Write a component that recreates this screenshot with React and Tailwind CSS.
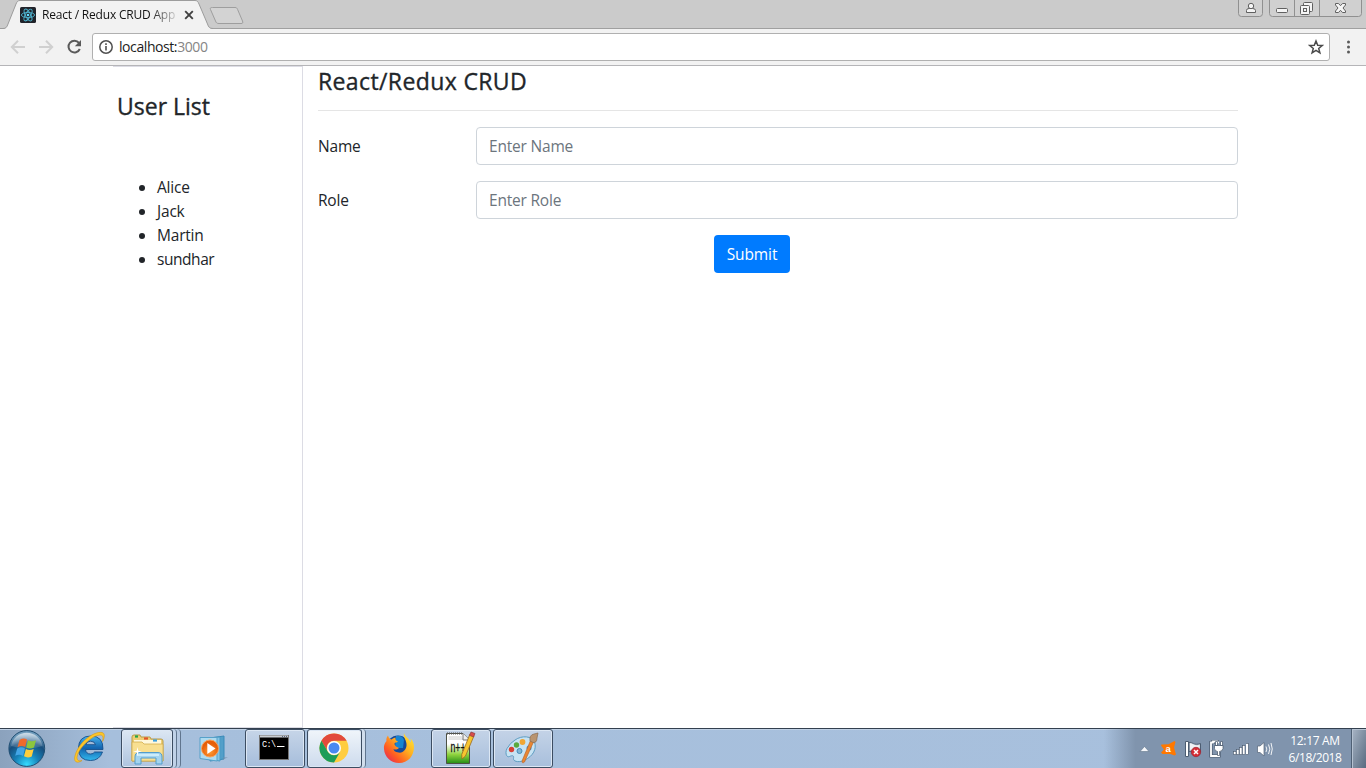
import React from "react";

function ReactFavicon() {
  return (
    <svg width="16" height="16" viewBox="0 0 16 16">
      <rect width="16" height="16" rx="1.5" fill="#20232a" />
      <g fill="none" stroke="#4fb4cf" strokeWidth="0.9">
        <ellipse cx="8" cy="8" rx="6.6" ry="2.6" />
        <ellipse cx="8" cy="8" rx="6.6" ry="2.6" transform="rotate(60 8 8)" />
        <ellipse cx="8" cy="8" rx="6.6" ry="2.6" transform="rotate(120 8 8)" />
      </g>
      <circle cx="8" cy="8" r="1.3" fill="#61dafb" />
    </svg>
  );
}

function TabStrip() {
  return (
    <div className="relative flex h-[29px] bg-[#cbcbcb]">
      <svg className="absolute inset-0" width="1366" height="29" viewBox="0 0 1366 29">
        <path d="M0 28.5H1366" stroke="#a0a0a0" />
        <path d="M3 29C6 28.5 7 27 8 24L16 4C17 1.5 18 .5 20 .5H195C197 .5 198 1.5 199 4L207.500 24C208.500 27 209.500 28.500 213 29Z" fill="#f2f2f2" />
        <path d="M0 28.5H3C6 28.500 7 27 8 24L16 4C17 1.500 18 .500 20 .500H195C197 .500 198 1.500 199 4L207.500 24C208.500 27 209.500 28.500 213 28.500" fill="none" stroke="#9c9c9c" />
        <path d="M212.500 7.500H235C236.500 7.500 237 8 237.600 9.500L242.500 21C243.200 23 242.700 23.500 241 23.500H219C217 23.500 216.300 23 215.500 21L210.500 9.500C209.900 8 210.500 7.500 212.500 7.500Z" fill="#d3d3d3" stroke="#9e9e9e" />
      </svg>
      <div className="relative ml-5 mt-[7px] h-4 w-4"><ReactFavicon /></div>
      <div className="relative ml-1.5 mt-[7px] h-4 w-[135px] overflow-hidden whitespace-nowrap bg-linear-to-r from-[#111] from-80% to-[#11111120] bg-clip-text text-[12px] leading-4 tracking-[-0.2px] text-transparent">
        React / Redux CRUD App
      </div>
      <svg className="relative ml-[7px] mt-[10px]" width="10" height="10" viewBox="0 0 10 10">
        <path d="M1.200 1.200L8.800 8.800M8.800 1.200L1.200 8.800" stroke="#404040" strokeWidth="1.900" />
      </svg>
      <WindowButtons />
    </div>
  );
}

function WindowButtons() {
  return (
    <svg className="relative ml-auto mr-1" width="126" height="19" viewBox="1236 0 126 19">
      <g fill="#d0d0d0" stroke="#909090">
        <path d="M1238.500 -1V13.500Q1238.500 16.500 1241.500 16.500H1259.500Q1262.500 16.500 1262.500 13.500V-1" />
        <path d="M1269.500 -1V13.500Q1269.500 16.500 1272.500 16.500H1358.500Q1361.500 16.500 1361.500 13.500V-1" />
        <path d="M1294.500 0V16M1319.500 0V16" />
      </g>
      <g fill="#f5f5f5" stroke="#606060">
        <path d="M1246.500 12.500V10.500Q1246.500 8.500 1249 8.500H1252.500Q1255.500 8.500 1255.500 10.500V12.500Z" />
        <circle cx="1251" cy="6" r="2.700" />
        <rect x="1276.500" y="8.500" width="11" height="4" rx="1" />
        <rect x="1303.500" y="2.500" width="9" height="9" rx="1" />
        <rect x="1300.500" y="5.500" width="9" height="9" rx="1" />
        <rect x="1303.500" y="8.500" width="3" height="3" />
        <path d="M1335.500 3.500H1338.500L1340.500 5.700L1342.500 3.500H1345.500V5L1343 8L1345.500 11V12.500H1342.500L1340.500 10.300L1338.500 12.500H1335.500V11L1338 8L1335.500 5Z" />
      </g>
    </svg>
  );
}

function Toolbar() {
  return (
    <div className="flex h-[37px] items-center border-b border-[#b5b5b8] bg-[#f2f2f2]">
      <svg className="ml-[10px]" width="74" height="16" viewBox="10 39 74 16" fill="none">
        <g stroke="#d0d0d0" strokeWidth="2">
          <path d="M25 47H12M18 40.700L11.800 47L18 53.300" />
          <path d="M39 47H52M46 40.700L52.200 47L46 53.300" />
        </g>
        <path d="M79 42.800A5.900 5.900 0 1 0 79.800 49" stroke="#5a5a5a" strokeWidth="2" />
        <path d="M81 40V46.200H74.800Z" fill="#5a5a5a" />
      </svg>
      <div className="ml-2 flex h-7 w-[1238px] items-center rounded-[3px] border border-[#b0b0b0] bg-white">
        <svg className="ml-[5px]" width="16" height="16" viewBox="0 0 16 16">
          <circle cx="8" cy="8" r="6.200" fill="none" stroke="#505050" strokeWidth="1.500" />
          <path d="M8 7V11.500M8 4.300V5.900" stroke="#505050" strokeWidth="1.600" />
        </svg>
        <div className="ml-[5px] text-[14px] leading-5 tracking-[-0.42px] text-[#1c1c1c]">localhost:<span className="text-[#858585]">3000</span></div>
        <svg className="ml-auto mr-[5px]" width="16" height="16" viewBox="0 0 16 16">
          <path d="M8 2L9.700 6.300L14.200 6.500L10.700 9.400L11.900 13.900L8 11.400L4.100 13.900L5.300 9.400L1.800 6.500L6.300 6.300Z" fill="none" stroke="#4a4a4a" strokeWidth="1.500" />
        </svg>
      </div>
      <svg className="ml-4" width="5" height="14" viewBox="0 0 5 14" fill="#5a5a5a">
        <circle cx="2.500" cy="2" r="1.500" /><circle cx="2.500" cy="7" r="1.500" /><circle cx="2.500" cy="12" r="1.500" />
      </svg>
    </div>
  );
}

function Field({ label, placeholder }) {
  return (
    <div className="mb-4 flex h-[38px] items-center">
      <label className="w-[158px] text-[15.5px] leading-6 tracking-[-0.2px]">{label}</label>
      <input
        className="h-[38px] flex-1 rounded-[4px] border border-[#ced4da] px-3 text-[15.5px] tracking-[-0.2px] placeholder:text-[#6c757d]"
        placeholder={placeholder}
      />
    </div>
  );
}

function Page() {
  return (
    <main className="flex h-[662px] bg-white pl-[113px] text-[#212529]">
      <aside className="w-[190px] border-y border-r border-[#dcdce4] pl-1 pt-[23px]">
        <h2 className="text-[23px] font-medium leading-[32px] [-webkit-text-stroke:0.35px_#212529]">User List</h2>
        <ul className="mt-[53px] list-disc pl-10 text-[15.5px] leading-6 tracking-[-0.2px]">
          <li>Alice</li>
          <li>Jack</li>
          <li>Martin</li>
          <li className="tracking-[-0.45px]">sundhar</li>
        </ul>
      </aside>
      <section className="ml-[15px] w-[920px]">
        <h2 className="-mt-px text-[23px] font-medium leading-[32px] tracking-[0.38px] [-webkit-text-stroke:0.35px_#212529]">React/Redux CRUD</h2>
        <hr className="mb-4 mt-[13px] border-[#e5e5e5]" />
        <Field label="Name" placeholder="Enter Name" />
        <Field label="Role" placeholder="Enter Role" />
        <button className="ml-[396px] block h-[38px] w-[76px] rounded-[4px] bg-[#007bff] pt-px text-[15.5px] tracking-[-0.1px] text-white">Submit</button>
      </section>
    </main>
  );
}

function StartOrb() {
  return (
    <svg width="40" height="39" viewBox="7 729 40 39">
      <defs>
        <radialGradient id="orb" cx=".5" cy=".95" r=".85">
          <stop offset="0" stopColor="#35dcff" /><stop offset=".4" stopColor="#1681b8" /><stop offset=".75" stopColor="#174d7c" /><stop offset="1" stopColor="#6d9abb" />
        </radialGradient>
        <linearGradient id="orbGloss" x1="0" y1="0" x2="0" y2="1"><stop offset="0" stopColor="#fff" stopOpacity=".65" /><stop offset="1" stopColor="#fff" stopOpacity=".08" /></linearGradient>
      </defs>
      <circle cx="26.800" cy="748.500" r="17.900" fill="url(#orb)" stroke="#204e72" />
      <path d="M11 746A16 16 0 0 1 42.500 746Q27 751 11 746Z" fill="url(#orbGloss)" />
      <path d="M19.500 740Q23.500 737.300 27 739.500L25.200 747Q21.500 745 17.500 747.200Z" fill="#ef6a2c" />
      <path d="M28 740.200Q31.500 742.200 36 740.200L34 747.600Q30 749.500 26.200 747.500Z" fill="#8cc63e" />
      <path d="M17.200 748.400Q21.300 746.300 25 748.500L23 756Q19.500 753.700 15.200 755.700Z" fill="#43a5e6" />
      <path d="M25.900 749Q29.500 751.100 33.700 749L31.700 756.500Q27.700 758.500 24 756.300Z" fill="#ffce3d" />
    </svg>
  );
}

function InternetExplorer() {
  return (
    <svg width="34" height="34" viewBox="0 0 34 34">
      <defs><linearGradient id="ie" x1="0" y1="0" x2="0" y2="1"><stop offset="0" stopColor="#46b5ef" /><stop offset=".5" stopColor="#1263ae" /><stop offset="1" stopColor="#32b9ee" /></linearGradient></defs>
      <path d="M31 19.500H13.500Q14 24 18.500 24Q21.500 24 22.600 22H30.500Q27.500 30.500 18.500 30.500Q6.500 30.500 6.500 18.500Q6.500 6 18.700 6Q31.500 6 31 19.500ZM13.700 14.700H23.500Q22.700 11.200 18.600 11.200Q14.700 11.200 13.700 14.700Z" fill="url(#ie)" stroke="#164f8b" strokeWidth=".9" />
      <path d="M10 30.500C5 34 1 32 3.200 25C7 12 22 1 30 2.500C33.500 3.300 32.500 8 30.500 11.500C31.500 7 31 5 28 5C20 5 5.500 19 5 27.500C5 31 7.500 31.200 10 30.500Z" fill="#fcc62a" stroke="#d79917" strokeWidth=".6" />
    </svg>
  );
}

function Explorer() {
  return (
    <svg width="34" height="34" viewBox="0 0 34 34">
      <path d="M2 29V5Q2 3 4 3H10L11 5H20L21 7H31Q33 7 33 9V29Z" fill="#efcf75" stroke="#b99b48" />
      <path d="M4 8H31V28H4Z" fill="#fff8dc" />
      <path d="M2 10H12L14 12H33V29H2Z" fill="#f8df91" stroke="#d2ad4e" strokeWidth=".8" />
      <path d="M5 4.500H8" stroke="#22a648" strokeWidth="2.200" /><path d="M14 6.500H18" stroke="#e0542b" strokeWidth="2.200" /><path d="M23 8.500H27" stroke="#3c9fe0" strokeWidth="2.200" />
      <path d="M5 32V25Q5 20.500 9 20.500H28Q32 20.500 32 25V32H26V26H11V32Z" fill="#a4d4ef" stroke="#539dcc" />
      <path d="M7 23H29" stroke="#d8f4ff" strokeWidth="1.500" />
      <path d="M7.500 15L8.300 18.700L12 19.500L8.300 20.300L7.500 24L6.700 20.300L3 19.500L6.700 18.700Z" fill="#fff" />
    </svg>
  );
}

function MediaPlayer() {
  return (
    <svg width="30" height="28" viewBox="0 0 30 28">
      <defs><radialGradient id="wmp" cx=".5" cy=".7"><stop offset="0" stopColor="#ff9a33" /><stop offset="1" stopColor="#e65f08" /></radialGradient></defs>
      <path d="M11 3L25 1V24L11 26Z" fill="#529fc9" stroke="#3b8bb9" />
      <path d="M7 3L21 2V26L7 24Z" fill="#86c4e4" stroke="#4b9bc5" />
      <path d="M1 2.500H18V26L1 23.500Z" fill="#aedbf0" stroke="#57a1c9" />
      <path d="M24 22H29L24 25Z" fill="#738fac" opacity=".5" />
      <circle cx="11" cy="13.500" r="8.500" fill="url(#wmp)" stroke="#f7a35c" />
      <path d="M8.300 8V19L16.500 13.500Z" fill="#fff" />
    </svg>
  );
}

function Terminal() {
  return (
    <svg width="31" height="26" viewBox="0 0 31 26">
      <rect x=".500" y=".500" width="29" height="24" fill="#000" stroke="#777" />
      <path d="M1 1.500H29" stroke="#c9cdd1" strokeWidth="2" />
      <path d="M23 1.500H28" stroke="#5a6780" strokeDasharray="1 1" />
      <text x="3" y="11.500" fill="#fff" fontFamily="Liberation Mono, monospace" fontSize="8.5" textLength="14">C:\</text>
      <path d="M18 11.500H25.500" stroke="#fff" strokeWidth="1" />
    </svg>
  );
}

function Chrome() {
  return (
    <svg width="30" height="30" viewBox="0 0 30 30">
      <circle cx="15" cy="15" r="14.500" fill="#ffcd40" />
      <path d="M2.440 7.750A14.500 14.500 0 0 1 27.560 7.750H15A7.250 7.250 0 0 0 8.720 18.620Z" fill="#e24a3c" />
      <path d="M2.440 7.750L8.720 18.620A7.250 7.250 0 0 0 21.280 18.620L15 29.500A14.500 14.500 0 0 1 2.440 7.750Z" fill="#1d9d59" />
      <circle cx="15" cy="15" r="7" fill="#fff" /><circle cx="15" cy="15" r="5.500" fill="#4a89f0" />
    </svg>
  );
}

function Firefox() {
  return (
    <svg width="32" height="32" viewBox="0 0 32 32">
      <defs><linearGradient id="fox" x1="1" y1="0" x2="0" y2="1"><stop offset="0" stopColor="#fff23d" /><stop offset=".4" stopColor="#ffb01f" /><stop offset=".7" stopColor="#ff5b22" /><stop offset="1" stopColor="#dc176b" /></linearGradient></defs>
      <circle cx="15" cy="15" r="11.500" fill="#154a9c" />
      <path d="M13 4Q19 3 21 8L20 16L12 16Z" fill="#1684d1" />
      <path d="M21 1C20 5 23 7 23.500 12C24 17 20 21.500 15.500 20.500C12 20 10.500 18.500 10.500 17C12 18 14 17.700 16 16C14 15 11.500 14 11.500 12C11.500 10 15 10.500 15 9.500C13.500 9 12 8 12.500 5.500C10 6 9.300 6.700 8.600 7.500C6.700 7.200 5.500 5.700 5 3.500C3.300 5.500 3.200 7.500 3.500 9C1.500 11.500 .6 13.500 1 17C1.500 25 8 31 16 31C25 31 31 24 31 15C31 11 29.500 8.500 27.500 6.500C28 8.500 28 9.500 27.500 10.500C26.500 6.500 22 5 21 1Z" fill="url(#fox)" />
    </svg>
  );
}

function NotepadPlus() {
  return (
    <svg width="31" height="34" viewBox="0 0 31 34">
      <defs><linearGradient id="npp" x1="0" y1="0" x2="0" y2="1"><stop offset=".35" stopColor="#fff" /><stop offset=".7" stopColor="#8fd33e" /><stop offset="1" stopColor="#238c16" /></linearGradient></defs>
      <path d="M1.500 2.500H18L24.500 9V32.500H1.500Z" fill="url(#npp)" stroke="#4d5144" />
      <path d="M2 2.500H18" stroke="#555" strokeWidth="2" strokeDasharray="1 1" />
      <path d="M3.500 6H17M3.500 8H19" stroke="#ccc" />
      <path d="M18 2.500V9H24.500" fill="#eee" stroke="#777" />
      <text x="5.500" y="20.500" fontFamily="Liberation Sans, sans-serif" fontSize="14" textLength="15" lengthAdjust="spacingAndGlyphs" fill="#111" stroke="#111" strokeWidth=".3">n++</text>
      <path d="M25 3L29 4.800L20.500 25L17 28L16.700 23.500Z" fill="#f7c52f" stroke="#9a6a22" strokeWidth=".8" />
      <path d="M26 1L30 2.500L28.500 6L24.500 4.300Z" fill="#d94b4b" stroke="#8a3d3d" strokeWidth=".7" />
    </svg>
  );
}

function Paint() {
  return (
    <svg width="34" height="32" viewBox="0 0 34 32">
      <path d="M10 8C17 3 27 4 29.500 10C32 17 28 24 20 28C14 31 8 29.500 8.500 26.500C9 23.500 8 23 4.500 24.500C1 26 0 20 2 16.500Q5 11 10 8Z" fill="#c7e3f3" stroke="#5e9cc1" />
      <circle cx="6.500" cy="17.500" r="2.700" fill="#d84135" /><circle cx="11.500" cy="13" r="2.700" fill="#5aaa3d" /><circle cx="17.500" cy="10" r="2.900" fill="#f0a633" /><circle cx="14.500" cy="19" r="2.500" fill="#83b6d4" stroke="#458dba" /><circle cx="24" cy="16" r="2.500" fill="#418fd1" />
      <path d="M28.500 10L19.500 30Q17 32 17 29L25.500 8.500Z" fill="#e98732" stroke="#b75d20" strokeWidth=".6" />
      <path d="M25 9Q24 3 29 2L33 1L32 6Q32 11 28 10.500Z" fill="#b99470" stroke="#886b52" strokeWidth=".7" />
    </svg>
  );
}

const running = "flex h-[39px] items-center justify-center rounded-[3px] border border-[#3c4d62] pb-[2px] pr-[2px] shadow-[inset_0_0_0_1px_#dce7f4]";

function Taskbar() {
  return (
    <footer className="flex h-10 border-t border-[#33404f] bg-linear-to-r from-[#8ba2bd] via-[#a6bfdc] via-8% to-[#a8c0dd] shadow-[inset_0_1px_0_#c0d1e5]">
      <div className="ml-[7px] w-[65px]"><StartOrb /></div>
      <div className="w-[49px] pt-px"><InternetExplorer /></div>
      <div className="flex h-[39px] w-[52px] items-center justify-center rounded-[3px] border border-[#3c4d62] bg-linear-to-b from-[#dce7f3] to-[#aec4df] shadow-[inset_0_0_0_1px_#dce7f4]"><Explorer /></div>
      <div className="h-[39px] w-1 rounded-r-sm border-r border-[#60758e] bg-[#c0d2e8]" />
      <div className="h-[39px] w-1 rounded-r-sm border-r border-[#60758e] bg-[#b5c9e2]" />
      <div className="flex w-[64px] items-center pl-[18px]"><MediaPlayer /></div>
      <div className={`${running} w-[60px] bg-linear-to-b from-[#c6d5e8] to-[#a6bddb]`}><Terminal /></div>
      <div className={`${running} ml-0.5 w-[55px] bg-linear-to-b from-[#f0f5fa] to-[#cddbed]`}><Chrome /></div>
      <div className="h-[39px] w-1 rounded-r-sm border-r border-[#60758e] bg-[#d1deed]" />
      <div className="flex w-[65px] items-center pb-[2px] pl-[17px]"><Firefox /></div>
      <div className={`${running} w-[60px] bg-linear-to-b from-[#c4d3e7] to-[#a8bfdc]`}><NotepadPlus /></div>
      <div className={`${running} ml-0.5 w-[60px] bg-linear-to-b from-[#c4d3e7] to-[#a8bfdc]`}><Paint /></div>
      <div className="ml-auto flex w-[262px] bg-linear-to-r from-transparent to-[#8094ad] to-12%">
        <svg width="142" height="39" viewBox="1104 729 142 39" className="shrink-0">
          <path d="M1140 751.500H1149L1144.500 746.500Z" fill="#f5f7fa" stroke="#62758c" strokeWidth=".6" />
          <path d="M1161.500 744.500L1168.500 744.300L1174.500 741L1175.500 742L1174 747.500L1176 754.500L1174.500 755.500L1170.500 754H1162.500L1161 752.500L1164 749.500L1161 745.500Z" fill="#ff7800" />
          <text x="1165.500" y="751.500" fontSize="9.500" fontWeight="bold" fontFamily="Liberation Sans, sans-serif" fill="#fff">a</text>
          <path d="M1189 742.500C1192 741.500 1194 746 1200.500 743.500V752C1195 753.500 1193 750 1189 751.500Z" fill="#c4ccd6" stroke="#4c5d72" />
          <path d="M1190 743.500C1192.500 743 1194 746.500 1199.500 745V751C1195 752 1193 749 1190 750Z" fill="#fff" opacity=".75" />
          <path d="M1185.500 741.500H1188.500V756.500H1185.500Z" fill="#fff" stroke="#4c5d72" />
          <circle cx="1196" cy="752" r="4.700" fill="#d52d35" stroke="#9c2330" strokeWidth=".7" />
          <path d="M1194 750L1198 754M1198 750L1194 754" stroke="#fff" strokeWidth="1.500" />
          <path d="M1219 742.500H1217V741.500H1213V742.500H1211V756H1219V752" fill="none" stroke="#46566a" strokeWidth="3.200" />
          <path d="M1219 742.500H1217V741.500H1213V742.500H1211V756H1219V752" fill="none" stroke="#fff" strokeWidth="1.800" />
          <path d="M1214.500 745.500H1223V748.500Q1222 751.500 1219.500 751.500V755.500H1217.500V751.500Q1214.500 751 1214.500 748.500ZM1215.500 741.500H1217.500V745.500H1215.500ZM1220.500 741.500H1222.500V745.500H1220.500Z" fill="#fff" stroke="#46566a" strokeWidth=".7" />
          <g fill="#fff" stroke="#46566a" strokeWidth=".6">
            <rect x="1233.500" y="751.500" width="2.500" height="3" /><rect x="1236.500" y="749.500" width="2.500" height="5" /><rect x="1239.500" y="747.500" width="2.500" height="7" /><rect x="1242.500" y="745.500" width="2.500" height="9" />
          </g>
        </svg>
        <svg width="28" height="39" viewBox="1246 729 28 39" className="shrink-0">
          <rect x="1245.500" y="743.500" width="2.800" height="11" fill="#fff" stroke="#46566a" strokeWidth=".6" />
          <path d="M1257.500 746H1260L1264 742.500V756L1260 752.500H1257.500Z" fill="#fff" stroke="#536377" strokeWidth=".7" />
          <path d="M1266 746.500Q1267.600 749 1266 752M1268.500 744.500Q1271.200 749 1268.500 754M1271 743Q1273.500 749 1271 755" fill="none" stroke="#fff" strokeWidth=".9" />
        </svg>
        <div className="w-[77px] shrink-0 pl-[5px] pt-1 text-center text-[12px] leading-4 tracking-[-0.35px] text-white">
          <div>12:17 AM</div><div className="pt-px tracking-[-0.45px]">6/18/2018</div>
        </div>
        <div className="h-[39px] flex-1 border-l border-[#4f6074] bg-linear-to-br from-[#a8b5c5] to-[#596b80] shadow-[inset_1px_1px_0_#b5c2d1]" />
      </div>
    </footer>
  );
}

export default function App() {
  return (
    <div className="flex h-[768px] w-[1366px] flex-col overflow-hidden bg-white font-['Open_Sans','Noto_Sans',sans-serif]">
      <TabStrip />
      <Toolbar />
      <Page />
      <Taskbar />
    </div>
  );
}
